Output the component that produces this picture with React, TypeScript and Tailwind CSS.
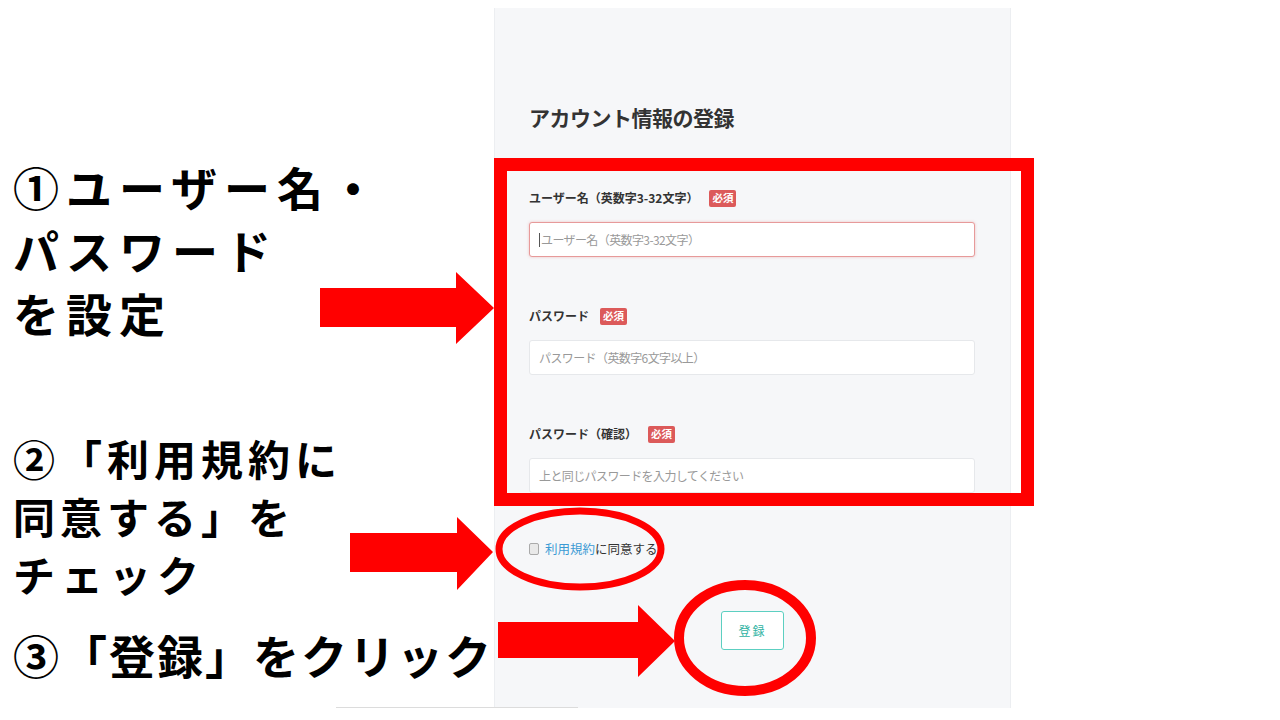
import React from "react";

const jp = "font-['Noto_Sans_CJK_JP','Noto_Sans',sans-serif]";

function Badge() {
  return (
    <span className="ml-[11px] inline-flex h-[17px] items-center rounded-[2px] bg-[#dc5a5a] px-[3px] text-[10.5px] font-bold leading-none text-white">
      必須
    </span>
  );
}

function Field({
  label,
  placeholder,
  focused,
}: {
  label: string;
  placeholder: string;
  focused?: boolean;
}) {
  return (
    <div>
      <div className="flex h-[20px] items-center text-[12px] font-bold tracking-[0px] text-[#333]">
        {label}
        <Badge />
      </div>
      <div
        className={`mt-[14px] flex h-[35px] w-[446px] items-center rounded-[3px] bg-white px-[9px] text-[12px] tracking-[-0.6px] text-[#999] ${
          focused
            ? "border border-[#e79a9a] shadow-[0_0_3px_rgba(220,90,90,0.35)]"
            : "border border-[#e6e8eb]"
        }`}
      >
        {focused && <span className="mr-[1px] h-[14px] w-px bg-[#555]" />}
        {placeholder}
      </div>
    </div>
  );
}

export default function App() {
  return (
    <div className={`relative h-[720px] w-[1280px] overflow-hidden bg-white ${jp}`}>
      <div className="flex">
        {/* slide annotations */}
        <div className="w-[494px] shrink-0 pl-[13px] pt-[155px] text-[46px] font-bold text-black">
          <div className="leading-[63px] tracking-[7px]">
            <div>①ユーザー名・</div>
            <div>パスワード</div>
            <div>を設定</div>
          </div>
          <div className="mt-[85px] text-[42px] leading-[58px] tracking-[5px]">
            <div>②「利用規約に</div>
            <div>同意する」を</div>
            <div className="tracking-[6px]">チェック</div>
          </div>
          <div className="mt-[22px] leading-[58px] tracking-[2px]">③「登録」をクリック</div>
        </div>

        {/* screenshot panel */}
        <div className="mt-[8px] h-[700px] w-[517px] shrink-0 border-x border-[#eceef1] bg-[#f6f7f9] pl-[34px]">
          <div className="mt-[94px] h-[30px] text-[21px] font-bold leading-[30px] tracking-[-0.5px] text-[#333]">
            アカウント情報の登録
          </div>
          <div className="mt-[56px]">
            <Field label="ユーザー名（英数字3-32文字）" placeholder="ユーザー名（英数字3-32文字）" focused />
          </div>
          <div className="mt-[49px]">
            <Field label="パスワード" placeholder="パスワード（英数字6文字以上）" />
          </div>
          <div className="mt-[49px]">
            <Field label="パスワード（確認）" placeholder="上と同じパスワードを入力してください" />
          </div>
          <div className="mt-[46px] flex h-[20px] items-center text-[12.5px] text-[#333]">
            <span className="mr-[6px] h-[12px] w-[10px] rounded-[2px] border border-[#aaa] bg-[#e9e9e9]" />
            <span className="text-[#3a9ad4]">利用規約</span>
            に同意する
          </div>
          <div className="mt-[52px] flex justify-center pr-[34px]">
            <div className="flex h-[39px] w-[63px] items-center justify-center rounded-[3px] border border-[#5ccfc1] bg-white text-[12px] tracking-[2px] text-[#2fb3a3]">
              登録
            </div>
          </div>
        </div>
      </div>

      {/* thin line at bottom */}
      <div className="absolute left-[336px] top-[707px] h-px w-[242px] bg-[#dcdcdc]" />

      {/* red highlight rectangle */}
      <div className="pointer-events-none absolute left-[494px] top-[158px] h-[348px] w-[540px] border-[13px] border-[#ff0000]" />

      {/* arrows and circles */}
      <svg className="pointer-events-none absolute left-0 top-0" width="1280" height="720">
        <polygon
          fill="#ff0000"
          points="320,288 456,288 456,272 494,308 456,344 456,327 320,327"
        />
        <polygon
          fill="#ff0000"
          points="350,533 457,533 457,517 493,552 457,590 457,572 350,572"
        />
        <polygon
          fill="#ff0000"
          points="498,622 638,622 638,605 675,641 638,677 638,658 498,658"
        />
        <ellipse cx="580" cy="549" rx="81" ry="38" fill="none" stroke="#ff0000" strokeWidth="7" />
        <ellipse cx="745" cy="638" rx="66" ry="53" fill="none" stroke="#ff0000" strokeWidth="10" />
      </svg>
    </div>
  );
}
